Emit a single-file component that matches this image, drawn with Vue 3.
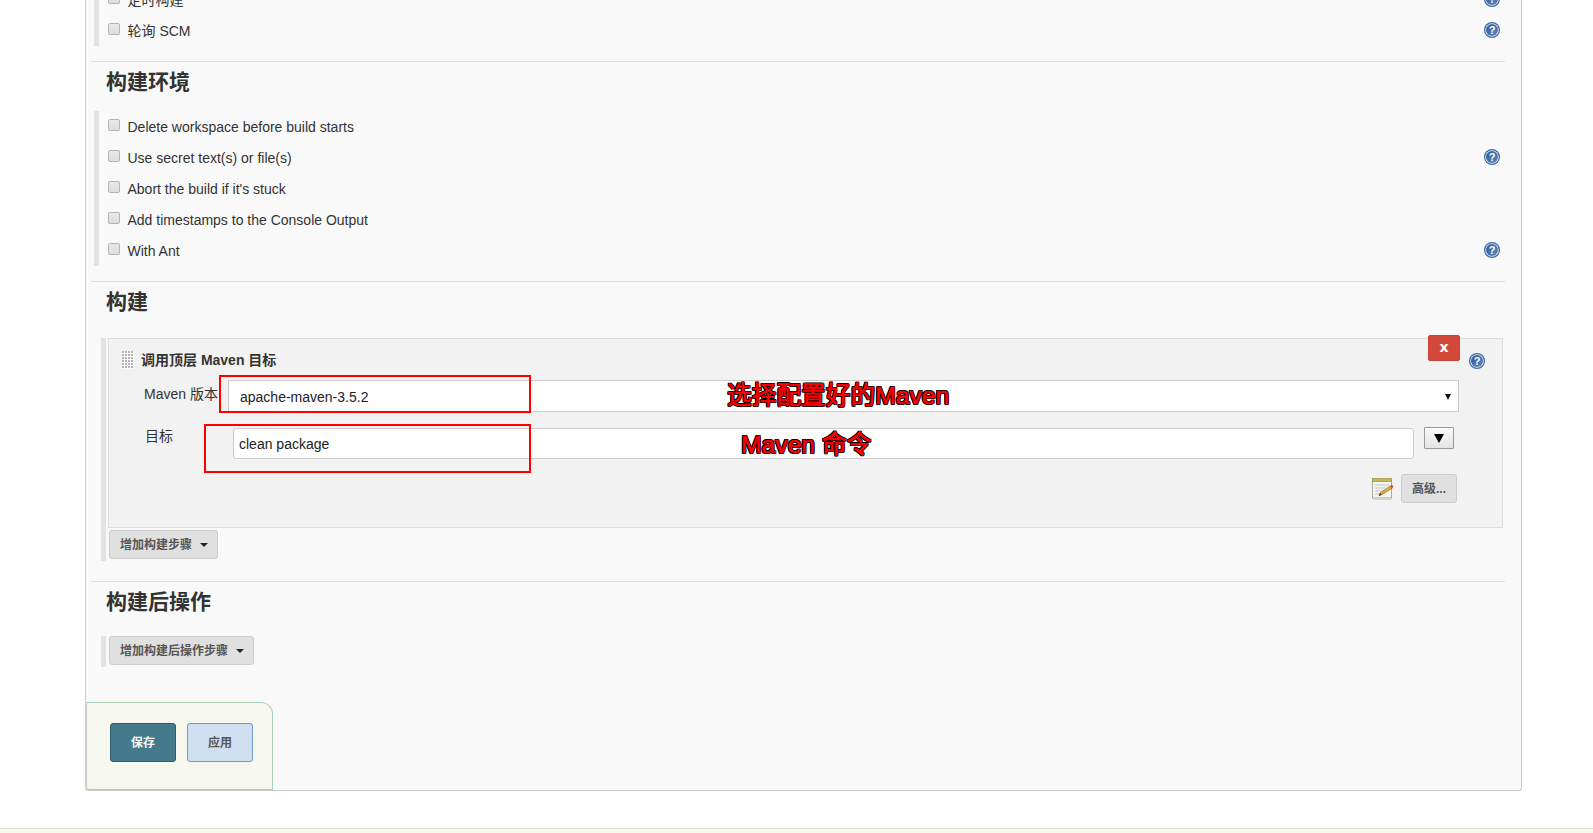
<script setup>
const envRows = [
  { label: 'Delete workspace before build starts', help: false },
  { label: 'Use secret text(s) or file(s)', help: true },
  { label: "Abort the build if it's stuck", help: false },
  { label: 'Add timestamps to the Console Output', help: false },
  { label: 'With Ant', help: true }
]
const triggerRows = [
  { label: '定时构建', help: true },
  { label: '轮询 SCM', help: true }
]
</script>

<template>
  <div class="page">
    <svg width="0" height="0" class="defs">
      <defs>
        <linearGradient id="helpFill" x1="0" y1="0" x2="1" y2="1">
          <stop offset="0" stop-color="#2a5896" />
          <stop offset="1" stop-color="#6489bc" />
        </linearGradient>
      </defs>
    </svg>

    <main class="panel">
      <div class="bar-group">
        <div v-for="row in triggerRows" :key="row.label" class="check-row">
          <input type="checkbox" class="check" />
          <span class="check-label">{{ row.label }}</span>
          <svg v-if="row.help" class="help" width="16" height="16" viewBox="0 0 16 16">
            <circle cx="8" cy="8" r="8" fill="#3a68a6" />
            <circle cx="8" cy="8" r="6.8" fill="#e6eef7" />
            <circle cx="8" cy="8" r="6" fill="url(#helpFill)" />
            <text x="8" y="12" class="help-mark">?</text>
          </svg>
        </div>
      </div>

      <section class="section">
        <h2 class="heading heading-env">构建环境</h2>
        <div class="bar-group">
          <div v-for="row in envRows" :key="row.label" class="check-row">
            <input type="checkbox" class="check" />
            <span class="check-label">{{ row.label }}</span>
            <svg v-if="row.help" class="help" width="16" height="16" viewBox="0 0 16 16">
              <circle cx="8" cy="8" r="8" fill="#3a68a6" />
              <circle cx="8" cy="8" r="6.8" fill="#e6eef7" />
              <circle cx="8" cy="8" r="6" fill="url(#helpFill)" />
              <text x="8" y="12" class="help-mark">?</text>
            </svg>
          </div>
        </div>
      </section>

      <section class="section">
        <h2 class="heading heading-build">构建</h2>
        <div class="step-group">
          <div class="step-box">
            <button class="delete-btn" type="button">x</button>
            <svg class="help step-help" width="16" height="16" viewBox="0 0 16 16">
              <circle cx="8" cy="8" r="8" fill="#3a68a6" />
              <circle cx="8" cy="8" r="6.8" fill="#e6eef7" />
              <circle cx="8" cy="8" r="6" fill="url(#helpFill)" />
              <text x="8" y="12" class="help-mark">?</text>
            </svg>
            <div class="step-title">
              <span class="handle"></span>
              <span>调用顶层 Maven 目标</span>
            </div>
            <div class="field field-version">
              <label class="field-label">Maven 版本</label>
              <div class="select">
                <span>apache-maven-3.5.2</span>
                <span class="select-caret"></span>
              </div>
            </div>
            <div class="field field-goal">
              <label class="field-label goal-label">目标</label>
              <input class="text-input" value="clean package" />
              <button class="expand-btn" type="button"><span class="expand-caret"></span></button>
            </div>
            <div class="step-actions">
              <svg class="notepad" width="24" height="24" viewBox="0 0 24 24">
                <rect x="1.5" y="3" width="19" height="18" fill="#f6f6f0" stroke="#a9a9a0" />
                <rect x="1.5" y="1.5" width="19" height="3" fill="#c8b45a" stroke="#94853c" stroke-width="0.6" />
                <path d="M4 8h14M4 11h10M4 14h8M4 17h7" stroke="#c5c5c0" stroke-width="1" />
                <path d="M8 19l1-3 10-7 2 2.4-10 6z" fill="#e8a93c" stroke="#8c6420" stroke-width="0.6" />
                <path d="M19 9l2 2.4 1.5-1.6-1.6-2.2z" fill="#e0483c" />
                <path d="M8 19l1-3 2 1.4z" fill="#4a3a20" />
                <rect x="2" y="21.5" width="18" height="1.5" fill="#d5d5d5" />
              </svg>
              <button class="soft-btn advanced-btn" type="button">高级...</button>
            </div>
          </div>
          <button class="soft-btn add-btn" type="button">增加构建步骤<span class="btn-caret"></span></button>
        </div>
      </section>

      <section class="section section-post">
        <h2 class="heading heading-post">构建后操作</h2>
        <div class="post-group">
          <button class="soft-btn add-btn" type="button">增加构建后操作步骤<span class="btn-caret"></span></button>
        </div>
      </section>

      <div class="save-bar">
        <button class="save-btn" type="button">保存</button>
        <button class="apply-btn" type="button">应用</button>
      </div>
    </main>

    <footer class="page-footer"></footer>

    <div class="mark mark-version"></div>
    <div class="mark mark-goal"></div>
    <div class="note note-version">选择配置好的Maven</div>
    <div class="note note-goal">Maven 命令</div>
  </div>
</template>

<style>
html, body {
  margin: 0;
  background: #fff;
}
</style>

<style scoped>
.page {
  position: relative;
  height: 833px;
  overflow: hidden;
  font-family: "Liberation Sans", "Noto Sans CJK SC", sans-serif;
  font-size: 14px;
  color: #333;
  background: #fff;
}
.defs {
  position: absolute;
}
.panel {
  margin: -16px 71px 0 85px;
  height: 807px;
  box-sizing: border-box;
  padding-left: 5px;
  padding-right: 16px;
  border: 1px solid #ccc;
  border-top: 0;
  border-radius: 0 0 3px 3px;
  background: #f9f9f9;
  position: relative;
}
.bar-group {
  margin-left: 3px;
  padding-left: 9px;
  border-left: 5px solid #e2e2e2;
}
.check-row {
  height: 31px;
  display: flex;
  align-items: center;
  position: relative;
}
.check {
  appearance: none;
  width: 12px;
  height: 12px;
  margin: -3px 8px 0 0;
  box-sizing: border-box;
  border: 1px solid #b4b4b4;
  border-radius: 2px;
  background: linear-gradient(#e8e8e8, #dedede);
}
.check-label {
  line-height: 31px;
  position: relative;
  top: 1px;
  margin-left: -0.5px;
}
.help {
  display: block;
}
.check-row .help {
  position: absolute;
  right: 5px;
  top: 7px;
}
.help-mark {
  font-family: "Liberation Sans", sans-serif;
  font-size: 11px;
  font-weight: 700;
  fill: #fff;
  text-anchor: middle;
}
.section {
  margin-top: 15px;
  border-top: 1px solid #ddd;
}
.section-post {
  margin-top: 20px;
}
.heading {
  margin: 0;
  padding-left: 15px;
  font-size: 21px;
  font-weight: 700;
  line-height: 40px;
  color: #333;
}
.heading-env {
  margin-bottom: 9px;
}
.heading-build {
  margin-bottom: 16px;
}
.heading-post {
  margin-bottom: 14px;
}
.step-group {
  margin-left: 10px;
  padding-left: 2px;
  border-left: 5px solid #e2e2e2;
  height: 223px;
}
.step-box {
  position: relative;
  box-sizing: border-box;
  height: 190px;
  margin-right: 2px;
  border: 1px solid #ddd;
  background: #f2f2f2;
}
.delete-btn {
  position: absolute;
  top: -4px;
  right: 42px;
  width: 32px;
  height: 26px;
  padding: 0 0 2px;
  border: 1px solid #c94436;
  border-radius: 2px;
  background: #d24939;
  color: #fff;
  font-family: "DejaVu Sans", sans-serif;
  font-size: 14px;
  font-weight: 700;
}
.step-help {
  position: absolute;
  top: 14px;
  right: 17px;
}
.step-title {
  display: flex;
  align-items: center;
  height: 41px;
  padding-left: 13px;
  font-size: 14px;
  font-weight: 700;
  line-height: 16px;
}
.handle {
  width: 12px;
  height: 18px;
  margin-right: 7px;
  background-color: #fbfbfb;
  background-image: radial-gradient(circle at 1px 1px, #b5b5b5 1px, transparent 1px);
  background-size: 3px 3px;
}
.field {
  display: flex;
}
.field-version {
  height: 32px;
  margin-left: 35px;
}
.field-goal {
  height: 31px;
  margin-top: 16px;
  margin-left: 36px;
}
.field-label {
  line-height: 28px;
  white-space: nowrap;
}
.field-version .field-label {
  width: 84px;
}
.goal-label {
  width: 88px;
  line-height: 16px;
}
.select {
  width: 1231px;
  box-sizing: border-box;
  padding: 1px 7px 0 11px;
  display: flex;
  align-items: center;
  justify-content: space-between;
  border: 1px solid #ccc;
  background: #fff;
  color: #222;
}
.select-caret {
  width: 0;
  height: 0;
  border-left: 3px solid transparent;
  border-right: 3px solid transparent;
  border-top: 6px solid #111;
}
.text-input {
  width: 1181px;
  box-sizing: border-box;
  padding: 0 5px;
  border: 1px solid #ccc;
  border-radius: 3px;
  background: #fff;
  color: #222;
  font: 14px "Liberation Sans", sans-serif;
  outline: 0;
}
.expand-btn {
  width: 30px;
  height: 22px;
  margin: -1px 0 0 10px;
  padding: 0;
  display: flex;
  align-items: center;
  justify-content: center;
  border: 1px solid #999;
  border-radius: 1px;
  background: linear-gradient(#fafafa, #e4e4e4);
}
.expand-caret {
  width: 0;
  height: 0;
  border-left: 5px solid transparent;
  border-right: 5px solid transparent;
  border-top: 9px solid #000;
}
.step-actions {
  display: flex;
  align-items: center;
  justify-content: flex-end;
  margin: 15px 45px 0 0;
  gap: 6px;
}
.notepad {
  display: block;
}
.soft-btn {
  box-sizing: border-box;
  padding: 0 0 2px;
  border: 1px solid #ccc;
  border-radius: 3px;
  background: #e0e0e0;
  color: #555;
  font-family: "Liberation Sans", "Noto Sans CJK SC", sans-serif;
  font-size: 12px;
  font-weight: 700;
}
.advanced-btn {
  width: 56px;
  height: 29px;
}
.add-btn {
  display: inline-flex;
  align-items: center;
  height: 29px;
  padding: 0 9px 2px 10px;
  margin: 2px 0 0 1px;
}
.btn-caret {
  width: 0;
  height: 0;
  margin-left: 8px;
  margin-top: 3px;
  border-left: 4px solid transparent;
  border-right: 4px solid transparent;
  border-top: 4px solid #222;
}
.post-group {
  margin-left: 10px;
  padding-left: 2px;
  height: 31px;
  border-left: 5px solid #e2e2e2;
}
.post-group .add-btn {
  margin-top: 0;
}
.save-bar {
  position: absolute;
  left: 0;
  bottom: 0;
  width: 187px;
  height: 88px;
  box-sizing: border-box;
  display: flex;
  align-items: flex-start;
  gap: 11px;
  padding: 20px 0 0 23px;
  border: 1px solid #a9d0b5;
  border-left-color: #ccc;
  border-radius: 0 12px 0 3px;
  background: #f6f8f0;
}
.save-btn,
.apply-btn {
  width: 66px;
  height: 39px;
  box-sizing: border-box;
  padding: 0 0 2px;
  border-radius: 3px;
  font-family: "Liberation Sans", "Noto Sans CJK SC", sans-serif;
  font-size: 12px;
  font-weight: 700;
}
.save-btn {
  border: 1px solid #2f5a6b;
  background: #457a8c;
  color: #f2f6f8;
}
.apply-btn {
  border: 1px solid #6b9ccb;
  background: #cddff0;
  color: #555;
}
.page-footer {
  margin-top: 37px;
  height: 6px;
  border-top: 1px solid #dcdcd0;
  background: #f6f8f0;
}
.mark {
  position: absolute;
  box-sizing: border-box;
  border: 2px solid #f00;
}
.mark-version {
  left: 219px;
  top: 375px;
  width: 312px;
  height: 38px;
}
.mark-goal {
  left: 204px;
  top: 424px;
  width: 327px;
  height: 49px;
}
.note {
  position: absolute;
  color: #f00;
  font-family: "Liberation Sans", "Noto Sans CJK SC", sans-serif;
  font-size: 24.7px;
  font-weight: 400;
  line-height: 30px;
  white-space: nowrap;
  -webkit-text-stroke: 0.6px #f00;
  text-shadow: 1px 0 0 #000, -1px 0 0 #000, 0 1px 0 #000, 0 -1px 0 #000, 1px 1px 0 #000, -1px -1px 0 #000, 1px -1px 0 #000, -1px 1px 0 #000;
}
.note-version {
  left: 727px;
  top: 381px;
}
.note-goal {
  left: 741px;
  top: 430px;
}
</style>
